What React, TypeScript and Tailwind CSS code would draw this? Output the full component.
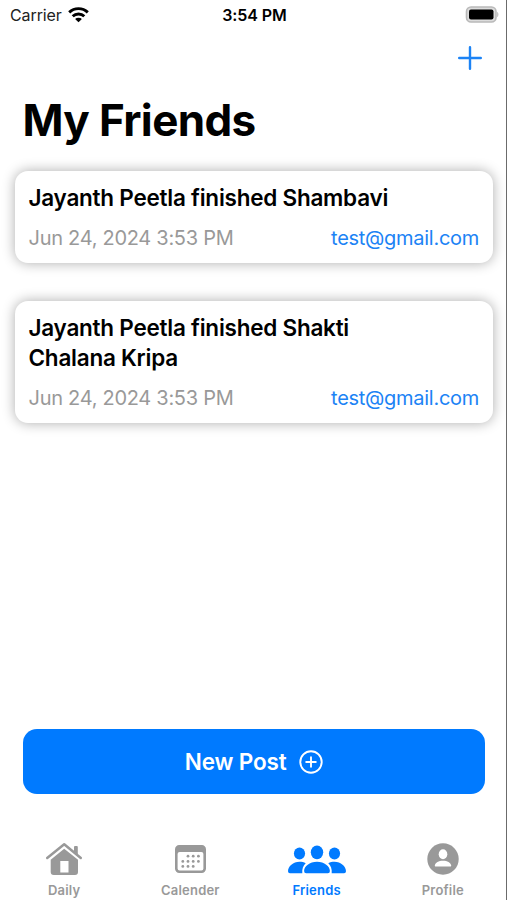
import type { ReactNode } from "react";
import { clsx } from "clsx";

interface Post {
  id: number;
  title: string;
  date: string;
  email: string;
}

const posts: Post[] = [
  { id: 1, title: "Jayanth Peetla finished Shambavi", date: "Jun 24, 2024 3:53 PM", email: "test@gmail.com" },
  { id: 2, title: "Jayanth Peetla finished Shakti Chalana Kripa", date: "Jun 24, 2024 3:53 PM", email: "test@gmail.com" },
];

function WifiIcon() {
  return (
    <svg width="21" height="16" viewBox="0 0 21 16" fill="none" stroke="#000" strokeWidth="2.9">
      <path d="M1.2 5.4a13.4 13.4 0 0 1 18.6 0" />
      <path d="M4.7 9.3a8.3 8.3 0 0 1 11.6 0" />
      <path d="M10.5 15.3 7.1 12.1a4.8 4.8 0 0 1 6.8 0Z" fill="#000" stroke="none" />
    </svg>
  );
}

function BatteryIcon() {
  return (
    <svg width="34" height="17" viewBox="0 0 34 17" fill="none">
      <rect x="1.5" y="1" width="29.5" height="15" rx="4.5" fill="#dcdcdc" stroke="#b9b9b9" strokeWidth="1.6" />
      <rect x="4" y="3.5" width="24.5" height="10" rx="2" fill="#000" />
      <path d="M32.2 6c1.6.5 1.6 4.500 0 5Z" fill="#b9b9b9" />
    </svg>
  );
}

function HouseIcon() {
  return (
    <svg width="38" height="34" viewBox="0 0 38 34" fill="currentColor">
      <path d="M2.200 16 19.200 2.200 35.800 16" fill="none" stroke="currentColor" strokeWidth="2.500" strokeLinecap="round" strokeLinejoin="round" />
      <path d="M29 5a1 1 0 0 1 1-1h1.800a1 1 0 0 1 1 1v8.800l-3.800-3Z" />
      <path
        fillRule="evenodd"
        d="M19.200 6.800 33 17.800V30a3 3 0 0 1-3 3H8.700a3 3 0 0 1-3-3V17.800ZM15.300 19v11.600h8.200V19Z"
      />
    </svg>
  );
}

const calendarDots = [
  [13, 11.2], [18.2, 11.2], [23.4, 11.2],
  [7.8, 16.4], [13, 16.4], [18.2, 16.4], [23.4, 16.4],
  [7.8, 21.4], [13, 21.4], [18.2, 21.4],
];

function CalendarIcon() {
  return (
    <svg width="31" height="29" viewBox="0 0 31 29" fill="currentColor">
      <path
        fillRule="evenodd"
        d="M4.5 0h22A4.3 4.3 0 0 1 31 4.4v19.2a4.3 4.3 0 0 1-4.5 4.4h-22A4.3 4.3 0 0 1 0 23.6V4.4A4.3 4.3 0 0 1 4.5 0ZM4.6 7a2 2 0 0 0-2 2v14.4a2 2 0 0 0 2 2h21.8a2 2 0 0 0 2-2V9a2 2 0 0 0-2-2Z"
      />
      {calendarDots.map(([cx, cy]) => (
        <circle key={`${cx}-${cy}`} cx={cx} cy={cy} r="1.4" />
      ))}
    </svg>
  );
}

function FriendsIcon() {
  return (
    <svg width="58" height="29" viewBox="0 0 58 29" fill="currentColor">
      <ellipse cx="11.5" cy="8.5" rx="5.6" ry="6" />
      <ellipse cx="46.5" cy="8.5" rx="5.6" ry="6" />
      <path d="M0 26.2C0 21.5 5.2 16.8 11.5 16.8c2.3 0 4.4.5 6.2 1.4-2.5 2.5-3.8 5.6-3.4 10H2.3A2.1 2.1 0 0 1 0 26.2Z" />
      <path d="M58 26.2C58 21.5 52.8 16.8 46.5 16.8c-2.3 0-4.4.5-6.2 1.4 2.5 2.5 3.8 5.6 3.4 10h12A2.1 2.1 0 0 0 58 26.2Z" />
      <ellipse cx="29" cy="7.3" rx="6.2" ry="6.9" />
      <path
        d="M16.1 26C16.1 21.5 21.6 16.8 29 16.8S41.9 21.5 41.9 26a2.2 2.2 0 0 1-2.4 2.2h-21a2.2 2.2 0 0 1-2.4-2.2Z"
        stroke="#fff"
        strokeWidth="2.2"
        paintOrder="stroke"
      />
    </svg>
  );
}

function ProfileIcon() {
  return (
    <svg width="32" height="32" viewBox="0 0 32 32">
      <circle cx="16" cy="16" r="15.7" fill="currentColor" />
      <ellipse cx="16" cy="11.3" rx="4.3" ry="5" fill="#fff" />
      <path d="M7.8 22.4c.5-2.6 3.9-4.7 8.2-4.7s7.7 2.1 8.2 4.7c.1.7-.3 1.2-1 1.2H8.8c-.7 0-1.1-.5-1-1.2Z" fill="#fff" />
    </svg>
  );
}

function PostCard({ post }: { post: Post }) {
  return (
    <article className="rounded-[13px] bg-white px-3.5 pt-3 pb-[11px] shadow-[0_0_13px_rgba(0,0,0,0.33)]">
      <h2 className="max-w-[380px] text-[22.5px] leading-[30px] font-semibold tracking-[-0.24px]">{post.title}</h2>
      <div className="mt-[12.5px] flex items-center justify-between text-[20px] leading-[27px]">
        <span className="tracking-[-0.28px] text-[#999]">{post.date}</span>
        <span className="tracking-[-0.28px] text-[#1c83f5]">{post.email}</span>
      </div>
    </article>
  );
}

interface TabProps {
  label: string;
  icon: ReactNode;
  active?: boolean;
}

function Tab({ label, icon, active = false }: TabProps) {
  return (
    <button className={clsx("flex flex-1 flex-col items-center", active ? "text-[#007aff]" : "text-[#999]")}>
      <span className="flex h-10 items-center">{icon}</span>
      <span className="mt-0.5 text-[13px] leading-[18px] font-semibold tracking-[0.2px]">{label}</span>
    </button>
  );
}

export default function App() {
  return (
    <div className="flex h-[900px] w-[507px] flex-col overflow-hidden border-r border-[#6b6b6b] bg-white font-['Inter','Liberation_Sans',sans-serif] text-black">
      <div className="grid h-[29px] grid-cols-3 items-center pr-[7px] pl-[10px] text-[16px] leading-5">
        <div className="flex items-center gap-[6px] text-[#222]">
          <span className="tracking-[-0.1px]">Carrier</span>
          <WifiIcon />
        </div>
        <div className="text-center font-semibold tracking-[-0.1px]">3:54 PM</div>
        <div className="flex justify-end">
          <BatteryIcon />
        </div>
      </div>

      <div className="flex h-[57px] items-center justify-end pr-[23px]">
        <button aria-label="Add friend" className="text-[#1c83f5]">
          <svg width="26" height="26" viewBox="0 0 26 26" stroke="currentColor" strokeWidth="2.4" strokeLinecap="round">
            <path d="M13 2.200v21.600M2.200 13h21.600" />
          </svg>
        </button>
      </div>

      <h1 className="pl-[22.5px] text-[44px] leading-[68px] font-bold tracking-[-0.64px]">My Friends</h1>

      <main className="mt-[16.5px] flex flex-1 flex-col gap-[37.5px] pr-[13px] pl-[14.5px]">
        {posts.map((post) => (
          <PostCard key={post.id} post={post} />
        ))}
      </main>

      <button className="mr-[21px] ml-[22.5px] flex h-[65px] shrink-0 items-center justify-center gap-3 rounded-[14px] bg-[#007aff] text-[22.5px] font-semibold text-white">
        <span className="tracking-[-0.15px]">New Post</span>
        <svg width="24" height="24" viewBox="0 0 24 24" fill="none" stroke="currentColor" strokeWidth="1.9" strokeLinecap="round">
          <circle cx="12" cy="12" r="10.7" />
          <path d="M12 7.2v9.6M7.2 12h9.6" />
        </svg>
      </button>

      <nav className="mt-[45px] flex h-[61px] shrink-0 pl-px">
        <Tab label="Daily" icon={<HouseIcon />} />
        <Tab label="Calender" icon={<CalendarIcon />} />
        <Tab label="Friends" icon={<FriendsIcon />} active />
        <Tab label="Profile" icon={<ProfileIcon />} />
      </nav>
    </div>
  );
}
